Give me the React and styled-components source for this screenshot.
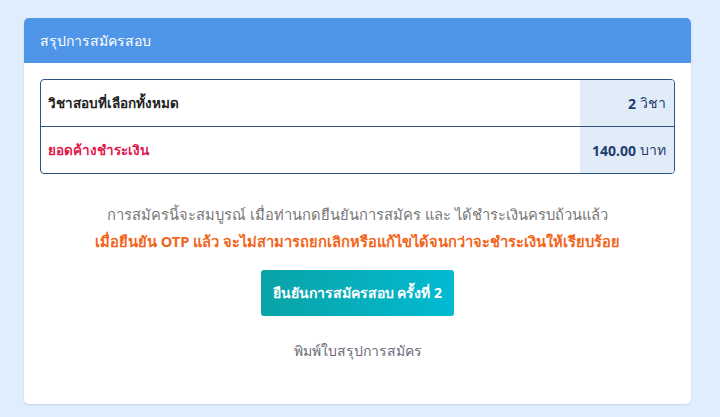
import React from 'react';
import styled, { createGlobalStyle } from 'styled-components';

const GlobalStyle = createGlobalStyle`
  html, body {
    margin: 0;
    padding: 0;
    background: #e0edfc;
    font-family: "Noto Sans", "DejaVu Sans", sans-serif;
  }
`;

const Page = styled.div`
  padding: 18px 29px 14px 24px;
`;

const Card = styled.div`
  background: #fff;
  border-radius: 5px;
  box-shadow: 0 1px 2px rgba(60, 90, 140, 0.18);
  overflow: hidden;
`;

const Header = styled.div`
  background: #4f95e8;
  color: #fff;
  height: 45px;
  display: flex;
  align-items: center;
  padding: 0 16px;
  font-size: 14px;
`;

const Body = styled.div`
  padding: 16px 16px 42px;
  display: flex;
  flex-direction: column;
  align-items: center;
`;

const Table = styled.div`
  align-self: stretch;
  border: 1px solid #2f5286;
  border-radius: 4px;
  overflow: hidden;
`;

const Row = styled.div`
  display: grid;
  grid-template-columns: 1fr 94px;
  height: 46px;
  & + & {
    border-top: 1px solid #2f5286;
  }
`;

const Label = styled.div`
  display: flex;
  align-items: center;
  padding: 0 7px;
  font-weight: 700;
  font-size: 13.5px;
  color: ${(p) => (p.$alert ? '#e2184c' : '#222')};
`;

const Value = styled.div`
  background: #e2ecf8;
  display: flex;
  align-items: center;
  justify-content: flex-end;
  padding: 0 8px;
  font-size: 14px;
  color: #1f3d6e;
  gap: 4px;
  b {
    font-weight: 700;
  }
`;

const Note = styled.p`
  margin: 27px 0 0;
  text-align: center;
  font-size: 14.7px;
  line-height: 27px;
  color: #777;
`;

const Warning = styled.span`
  display: block;
  color: #f2661c;
  font-weight: 700;
`;

const ConfirmButton = styled.button`
  margin-top: 15px;
  width: 193px;
  height: 46px;
  border: none;
  border-radius: 3px;
  background: linear-gradient(90deg, #0aa3a6, #02bad2);
  color: #fff;
  font-family: inherit;
  font-size: 14px;
  font-weight: 700;
  cursor: pointer;
`;

const PrintLink = styled.a`
  margin-top: 24px;
  font-size: 14px;
  color: #6c6c78;
  cursor: pointer;
`;

const App = () => (
  <Page>
    <GlobalStyle />
    <Card>
      <Header>สรุปการสมัครสอบ</Header>
      <Body>
        <Table>
          <Row>
            <Label>วิชาสอบที่เลือกทั้งหมด</Label>
            <Value>
              <b>2</b> วิชา
            </Value>
          </Row>
          <Row>
            <Label $alert>ยอดค้างชำระเงิน</Label>
            <Value>
              <b>140.00</b> บาท
            </Value>
          </Row>
        </Table>
        <Note>
          การสมัครนี้จะสมบูรณ์ เมื่อท่านกดยืนยันการสมัคร และ ได้ชำระเงินครบถ้วนแล้ว
          <Warning>เมื่อยืนยัน OTP แล้ว จะไม่สามารถยกเลิกหรือแก้ไขได้จนกว่าจะชำระเงินให้เรียบร้อย</Warning>
        </Note>
        <ConfirmButton>ยืนยันการสมัครสอบ ครั้งที่ 2</ConfirmButton>
        <PrintLink>พิมพ์ใบสรุปการสมัคร</PrintLink>
      </Body>
    </Card>
  </Page>
);

export default App;
